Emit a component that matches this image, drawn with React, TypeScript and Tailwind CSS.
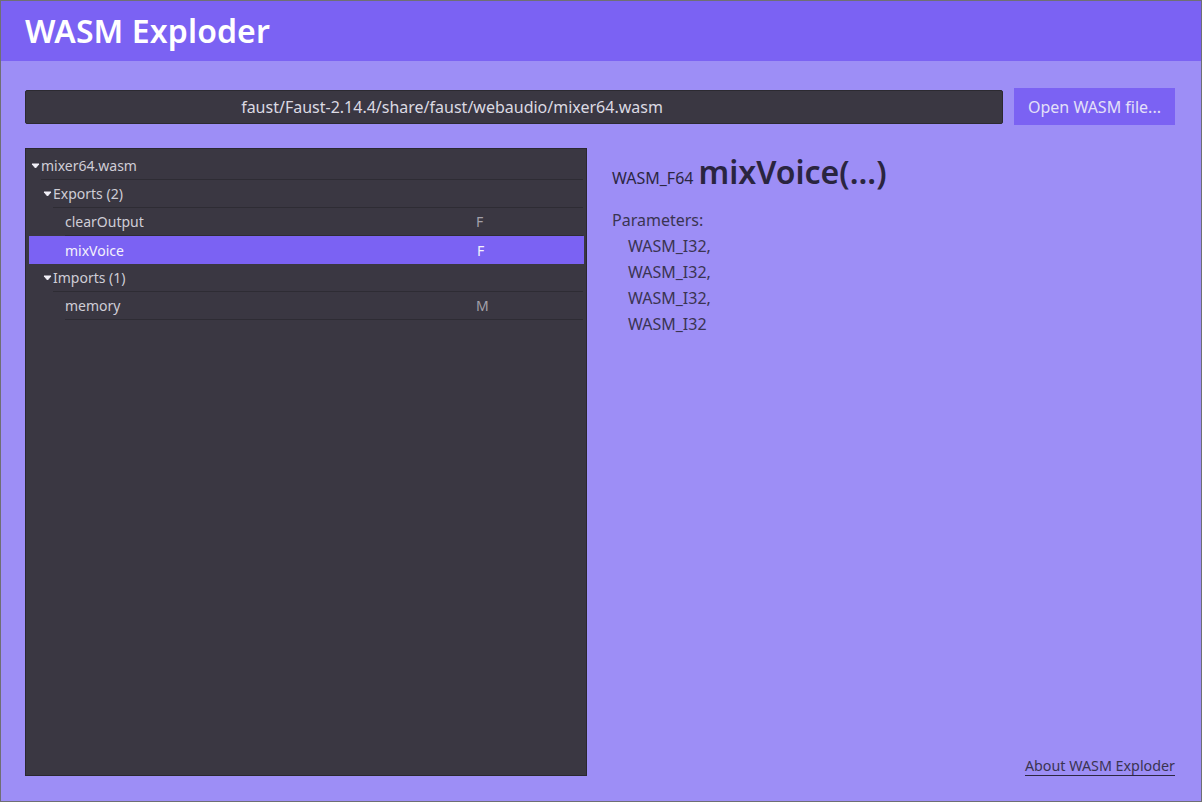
import { ReactNode } from 'react';

const font = { fontFamily: '"Noto Sans", "Open Sans", sans-serif' };

const Caret = () => (
  <svg width="9" height="6" viewBox="0 0 9 6" className="mr-[1px] shrink-0">
    <path
      d="M1 1 H8 L4.5 5 Z"
      fill="#f2f0f8"
      stroke="#f2f0f8"
      strokeWidth="1"
      strokeLinejoin="round"
    />
  </svg>
);

interface TreeRowProps {
  indent: number;
  label: string;
  kind?: string;
  caret?: boolean;
  active?: boolean;
}

const TreeRow = ({ indent, label, kind, caret, active }: TreeRowProps) => (
  <div
    className={
      active
        ? 'flex h-[28px] items-center bg-[#7b62f3] text-[#f4f2fc]'
        : 'flex h-[28px] items-center text-[#cfcdd6]'
    }
    style={{ paddingLeft: indent }}
  >
    <div
      className={
        active
          ? 'flex h-full flex-1 items-center'
          : 'flex h-full flex-1 items-center border-b border-[#2e2c34]'
      }
    >
      {caret && (
        <span className="-ml-[10px] flex w-[10px] items-center">
          <Caret />
        </span>
      )}
      <span className="flex-1">{label}</span>
      <span
        className={
          active ? 'w-[107px] text-[#f4f2fc]' : 'w-[107px] text-[#a3a1aa]'
        }
      >
        {kind}
      </span>
    </div>
  </div>
);

const Param = ({ children }: { children: ReactNode }) => (
  <div className="h-[26px] pl-4 leading-[26px]">{children}</div>
);

export default function App() {
  return (
    <div
      className="flex h-[802px] w-[1202px] flex-col border border-[#6f6f74] bg-[#9d8ef6]"
      style={font}
    >
      <header className="flex h-[60px] items-center bg-[#7b62f3] px-6">
        <h1 className="text-[32px] font-semibold leading-none tracking-[0.1px] text-white">
          WASM Exploder
        </h1>
      </header>

      <main className="flex flex-1 flex-col pt-[27px] pb-[25px] pl-6 pr-[26px]">
        <div className="flex items-center gap-[11px]">
          <div className="flex h-[34px] flex-1 items-center justify-center rounded-[2px] border border-[#2c2a31] bg-[#3a3742] pr-[124px] text-[16px] text-[#dcdae2]">
            faust/Faust-2.14.4/share/faust/webaudio/mixer64.wasm
          </div>
          <button className="h-[37px] w-[161px] bg-[#7b62f3] text-[16px] text-[#e4e0f8]">
            Open WASM file...
          </button>
        </div>

        <div className="mt-[23px] flex flex-1 gap-[25px]">
          <div className="w-[562px] border border-[#2a2830] bg-[#3a3742] pt-[3px] pl-[3px] pr-[2px] text-[14px]">
            <div className="pr-[1px]">
              <TreeRow indent={12} label="mixer64.wasm" caret />
              <TreeRow indent={24} label="Exports (2)" caret />
              <TreeRow indent={36} label="clearOutput" kind="F" />
            </div>
            <TreeRow indent={36} label="mixVoice" kind="F" active />
            <div className="pr-[1px]">
              <TreeRow indent={24} label="Imports (1)" caret />
              <TreeRow indent={36} label="memory" kind="M" />
            </div>
          </div>

          <div className="flex flex-1 flex-col text-[#2c2742]">
            <div className="mt-[5px] flex items-baseline gap-[5px]">
              <span className="text-[16px] text-[#2c2742]">WASM_F64</span>
              <span className="text-[32px] font-semibold leading-[38px] text-[#2a2540]">
                mixVoice(...)
              </span>
            </div>
            <div className="mt-[16px] text-[16px] text-[#3a3452]">
              <div className="h-[26px] leading-[26px]">Parameters:</div>
              <Param>WASM_I32,</Param>
              <Param>WASM_I32,</Param>
              <Param>WASM_I32,</Param>
              <Param>WASM_I32</Param>
            </div>
            <div className="mt-auto flex justify-end">
              <a className="border-b border-[#2c2742] text-[14.3px] leading-[18px] text-[#3a3452]">
                About WASM Exploder
              </a>
            </div>
          </div>
        </div>
      </main>
    </div>
  );
}
